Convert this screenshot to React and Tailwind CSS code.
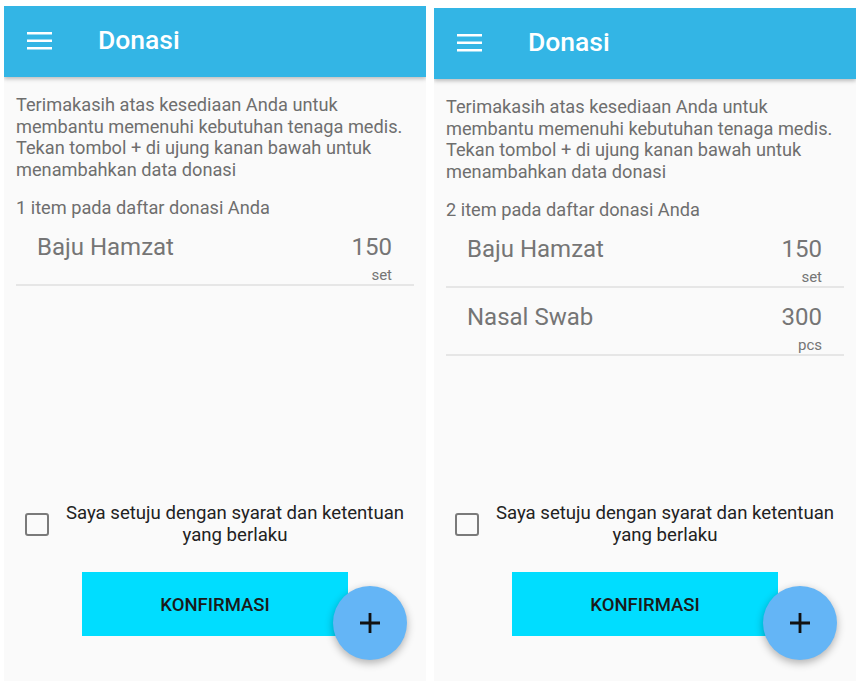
import { useState } from 'react';

const FONT = { fontFamily: 'Roboto, "Noto Sans", "Liberation Sans", sans-serif' };

function MenuIcon() {
  return (
    <svg width="25" height="18" viewBox="0 0 25 18" className="block">
      <rect x="0" y="0" width="25" height="2.5" fill="#fff" />
      <rect x="0" y="7.5" width="25" height="2.5" fill="#fff" />
      <rect x="0" y="15" width="25" height="2.5" fill="#fff" />
    </svg>
  );
}

function PlusIcon() {
  return (
    <svg width="20" height="20" viewBox="0 0 20 20" className="block">
      <path d="M10 0V20M0 10H20" stroke="#111" strokeWidth="2.8" />
    </svg>
  );
}

function DonationItem({ name, qty, unit, first }) {
  return (
    <div className={first ? 'pt-[13px]' : 'pt-[14px]'}>
      <div className="pl-[21px] pr-[22px]">
        <div className="flex h-[30px] items-center justify-between text-[24px] text-[#757575]">
          <span>{name}</span>
          <span>{qty}</span>
        </div>
        <div className="mt-[4px] text-right text-[15px] leading-[18px] text-[#757575]">{unit}</div>
      </div>
      <div className="h-[2px] bg-[#e6e6e6]" />
    </div>
  );
}

function Phone({ items, className }) {
  const [agreed, setAgreed] = useState(false);

  return (
    <div className={`relative flex w-[422px] flex-col overflow-hidden bg-[#fafafa] ${className}`}>
      {/* App bar */}
      <div className="relative z-10 flex h-[71px] shrink-0 items-center bg-[#33b5e5] shadow-[0_2px_4px_rgba(0,0,0,0.25)]">
        <div className="ml-[23px] mb-[2px]">
          <MenuIcon />
        </div>
        <h1 className="mb-[3px] ml-[46px] text-[26.5px] font-medium text-white">Donasi</h1>
      </div>

      <div className="px-[12px] pt-[17px]">
        <p className="whitespace-nowrap text-[18.2px] leading-[21.5px] text-[#6e6e6e]">
          Terimakasih atas kesediaan Anda untuk
          <br />
          membantu memenuhi kebutuhan tenaga medis.
          <br />
          Tekan tombol + di ujung kanan bawah untuk
          <br />
          menambahkan data donasi
        </p>
        <p className="mt-[17px] text-[18.2px] leading-[21.5px] text-[#6e6e6e]">
          {items.length} item pada daftar donasi Anda
        </p>
        {items.map((it, i) => (
          <DonationItem key={it.name} first={i === 0} {...it} />
        ))}
      </div>

      <div className="flex-1" />

      {/* Agreement */}
      <div className="flex items-center pr-[12px]">
        <button
          type="button"
          onClick={() => setAgreed(!agreed)}
          className="ml-[21px] h-[23px] w-[24px] shrink-0 rounded-[3px] border-[2.5px] border-[#7a7a7a]"
        />
        <p className="ml-[7px] flex-1 text-center text-[18.6px] leading-[22px] text-[#222]">
          Saya setuju dengan syarat dan ketentuan yang berlaku
        </p>
      </div>

      <div className="mb-[45px] mt-[26px] pl-[78px]">
        <button
          type="button"
          className="flex h-[64px] w-[266px] items-center justify-center bg-[#00ddff] pt-[4px] text-[18.5px] font-medium text-[#1a1a1a]"
        >
          KONFIRMASI
        </button>
      </div>

      {/* FAB */}
      <button
        type="button"
        className="absolute bottom-[21px] right-[19px] flex h-[74px] w-[74px] items-center justify-center rounded-full bg-[#64b5f6] shadow-[0_3px_8px_rgba(0,0,0,0.3)]"
      >
        <PlusIcon />
      </button>
    </div>
  );
}

export default function App() {
  const one = [{ name: 'Baju Hamzat', qty: 150, unit: 'set' }];
  const two = [
    { name: 'Baju Hamzat', qty: 150, unit: 'set' },
    { name: 'Nasal Swab', qty: 300, unit: 'pcs' },
  ];

  return (
    <div className="flex h-[688px] w-[868px] bg-white" style={FONT}>
      <Phone items={one} className="ml-[4px] mt-[6px] h-[675px]" />
      <Phone items={two} className="ml-[8px] mt-[8px] h-[673px]" />
    </div>
  );
}
